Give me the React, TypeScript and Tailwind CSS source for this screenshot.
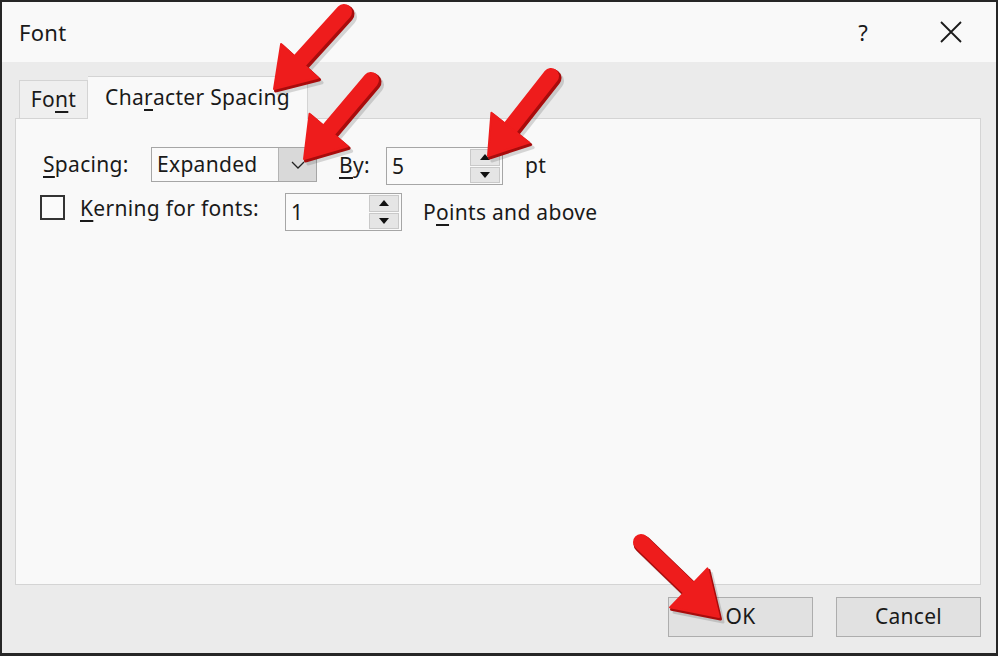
import React from "react";

type Pt = [number, number];

const arrows: { tail: Pt; tip: Pt; head: number; spread: number }[] = [
  { tail: [344, 12], tip: [274, 89], head: 38, spread: 25 },
  { tail: [371, 80], tip: [304, 159], head: 38, spread: 25 },
  { tail: [551, 76], tip: [488, 156], head: 36, spread: 24 },
  { tail: [641, 542], tip: [719, 617], head: 42, spread: 27 },
];

const Arrow = ({ tail, tip, head, spread }: { tail: Pt; tip: Pt; head: number; spread: number }) => {
  const dx = tip[0] - tail[0];
  const dy = tip[1] - tail[1];
  const len = Math.hypot(dx, dy);
  const ux = dx / len;
  const uy = dy / len;
  const nx = -uy;
  const ny = ux;
  const bx = tip[0] - ux * head;
  const by = tip[1] - uy * head;
  const poly = (ox: number, oy: number) =>
    `${tip[0] + ox},${tip[1] + oy} ${bx + nx * spread + ox},${by + ny * spread + oy} ${bx - nx * spread + ox},${by - ny * spread + oy}`;
  return (
    <g>
      {/* soft shadow */}
      <g opacity="0.22">
        <line x1={tail[0] + 4} y1={tail[1] + 5} x2={bx + ux * 4 + 4} y2={by + uy * 4 + 5} stroke="#555" strokeWidth="18" strokeLinecap="round" />
        <polygon points={poly(4, 5)} fill="#555" strokeLinejoin="round" stroke="#555" strokeWidth="3" />
      </g>
      {/* dark side */}
      <line x1={tail[0] + 1.5} y1={tail[1] + 2} x2={bx + ux * 4 + 1.5} y2={by + uy * 4 + 2} stroke="#a80c0c" strokeWidth="18" strokeLinecap="round" />
      <polygon points={poly(1.5, 2)} fill="#a80c0c" stroke="#a80c0c" strokeWidth="3" strokeLinejoin="round" />
      {/* face */}
      <line x1={tail[0]} y1={tail[1]} x2={bx + ux * 4} y2={by + uy * 4} stroke="#ee1c1c" strokeWidth="16" strokeLinecap="round" />
      <polygon points={poly(0, 0)} fill="#ee1c1c" stroke="#ee1c1c" strokeWidth="2" strokeLinejoin="round" />
    </g>
  );
};

const SpinBox = ({ value, className }: { value: string; className: string }) => (
  <div className={`flex h-[38px] items-center border border-[#a6a6a6] bg-[#fafafa] ${className}`}>
    <span className="flex-1 pl-[5px] leading-none">{value}</span>
    <div className="mr-[2px] flex h-[34px] w-[30px] flex-col gap-px">
      <div className="flex flex-1 items-center justify-center border border-[#c9c9c9] bg-[#e5e5e5]">
        <svg width="10" height="6" viewBox="0 0 10 6">
          <polygon points="5,0 10,6 0,6" fill="#111" />
        </svg>
      </div>
      <div className="flex flex-1 items-center justify-center border border-[#c9c9c9] bg-[#e5e5e5]">
        <svg width="10" height="6" viewBox="0 0 10 6">
          <polygon points="0,0 10,0 5,6" fill="#111" />
        </svg>
      </div>
    </div>
  </div>
);

export default function App() {
  return (
    <div className="relative h-[656px] w-[998px] bg-[#262626] pb-[3px] pl-[2px] pr-[2px] pt-[2px] font-['Noto_Sans','Open_Sans',sans-serif] text-[21px] tracking-[0.3px] text-[#1a1a1a]">
      <div className="flex h-full flex-col bg-[#ebebeb]">
        {/* title bar */}
        <div className="flex h-[60px] items-center bg-[#f9f9f9] pl-[17px]">
          <span className="text-[22px]">Font</span>
          <span className="ml-auto text-[22px]">?</span>
          <svg className="ml-[72px] mr-[34px]" width="22" height="22" viewBox="0 0 22 22">
            <path d="M1 1 L21 21 M21 1 L1 21" stroke="#1a1a1a" strokeWidth="1.8" />
          </svg>
        </div>

        <div className="flex flex-1 flex-col pl-[13px] pr-[15px] pt-[14px]">
          {/* tabs */}
          <div className="relative z-10 ml-[4px] flex h-[42px] items-end">
            <div className="flex h-[38px] w-[69px] items-center justify-center border border-b-0 border-[#d4d4d4] bg-[#efefef]">
              Fo<span className="underline underline-offset-4">n</span>t
            </div>
            <div className="-mb-[1px] flex h-[43px] w-[220px] items-center justify-center border border-b-0 border-l-0 border-[#d4d4d4] bg-[#f9f9f9]">
              Cha<span className="underline underline-offset-4">r</span>acter Spacing
            </div>
          </div>

          {/* panel */}
          <div className="flex h-[467px] flex-col border border-[#d4d4d4] bg-[#f9f9f9] pl-[24px] pt-[28px]">
            <div className="flex h-[38px] items-start">
              <span className="ml-[3px] w-[108px] leading-[35px]">
                <span className="underline underline-offset-4">S</span>pacing:
              </span>
              <div className="flex h-[35px] w-[166px] border border-[#a6a6a6] bg-[#fafafa]">
                <span className="flex-1 pl-[5px] leading-[33px]">Expanded</span>
                <div className="flex w-[38px] items-center justify-center border-l border-[#b4b4b4] bg-[#d9d9d9]">
                  <svg width="14" height="8" viewBox="0 0 14 8">
                    <path d="M1 1 L7 7 L13 1" fill="none" stroke="#222" strokeWidth="1.3" />
                  </svg>
                </div>
              </div>
              <span className="ml-[22px] w-[47px] leading-[37px]">
                <span className="underline underline-offset-4">B</span>y:
              </span>
              <SpinBox value="5" className="w-[117px]" />
              <span className="ml-[22px] leading-[37px]">pt</span>
            </div>

            <div className="mt-[8px] flex h-[38px] items-start">
              <div className="mt-[2px] h-[25px] w-[25px] border-2 border-[#333] bg-[#fafafa]" />
              <span className="ml-[15px] w-[205px] leading-[30px]">
                <span className="underline underline-offset-4">K</span>erning for fonts:
              </span>
              <SpinBox value="1" className="w-[117px]" />
              <span className="ml-[21px] leading-[38px]">
                P<span className="underline underline-offset-4">o</span>ints and above
              </span>
            </div>
          </div>

          {/* buttons */}
          <div className="mt-[12px] flex justify-end gap-[23px]">
            <button className="h-[40px] w-[145px] border border-[#adadad] bg-[#e1e1e1]">OK</button>
            <button className="h-[40px] w-[145px] border border-[#adadad] bg-[#e1e1e1]">Cancel</button>
          </div>
        </div>
      </div>

      <svg className="pointer-events-none absolute inset-0 z-20" width="998" height="656">
        {arrows.map((a, i) => (
          <Arrow key={i} {...a} />
        ))}
      </svg>
    </div>
  );
}
